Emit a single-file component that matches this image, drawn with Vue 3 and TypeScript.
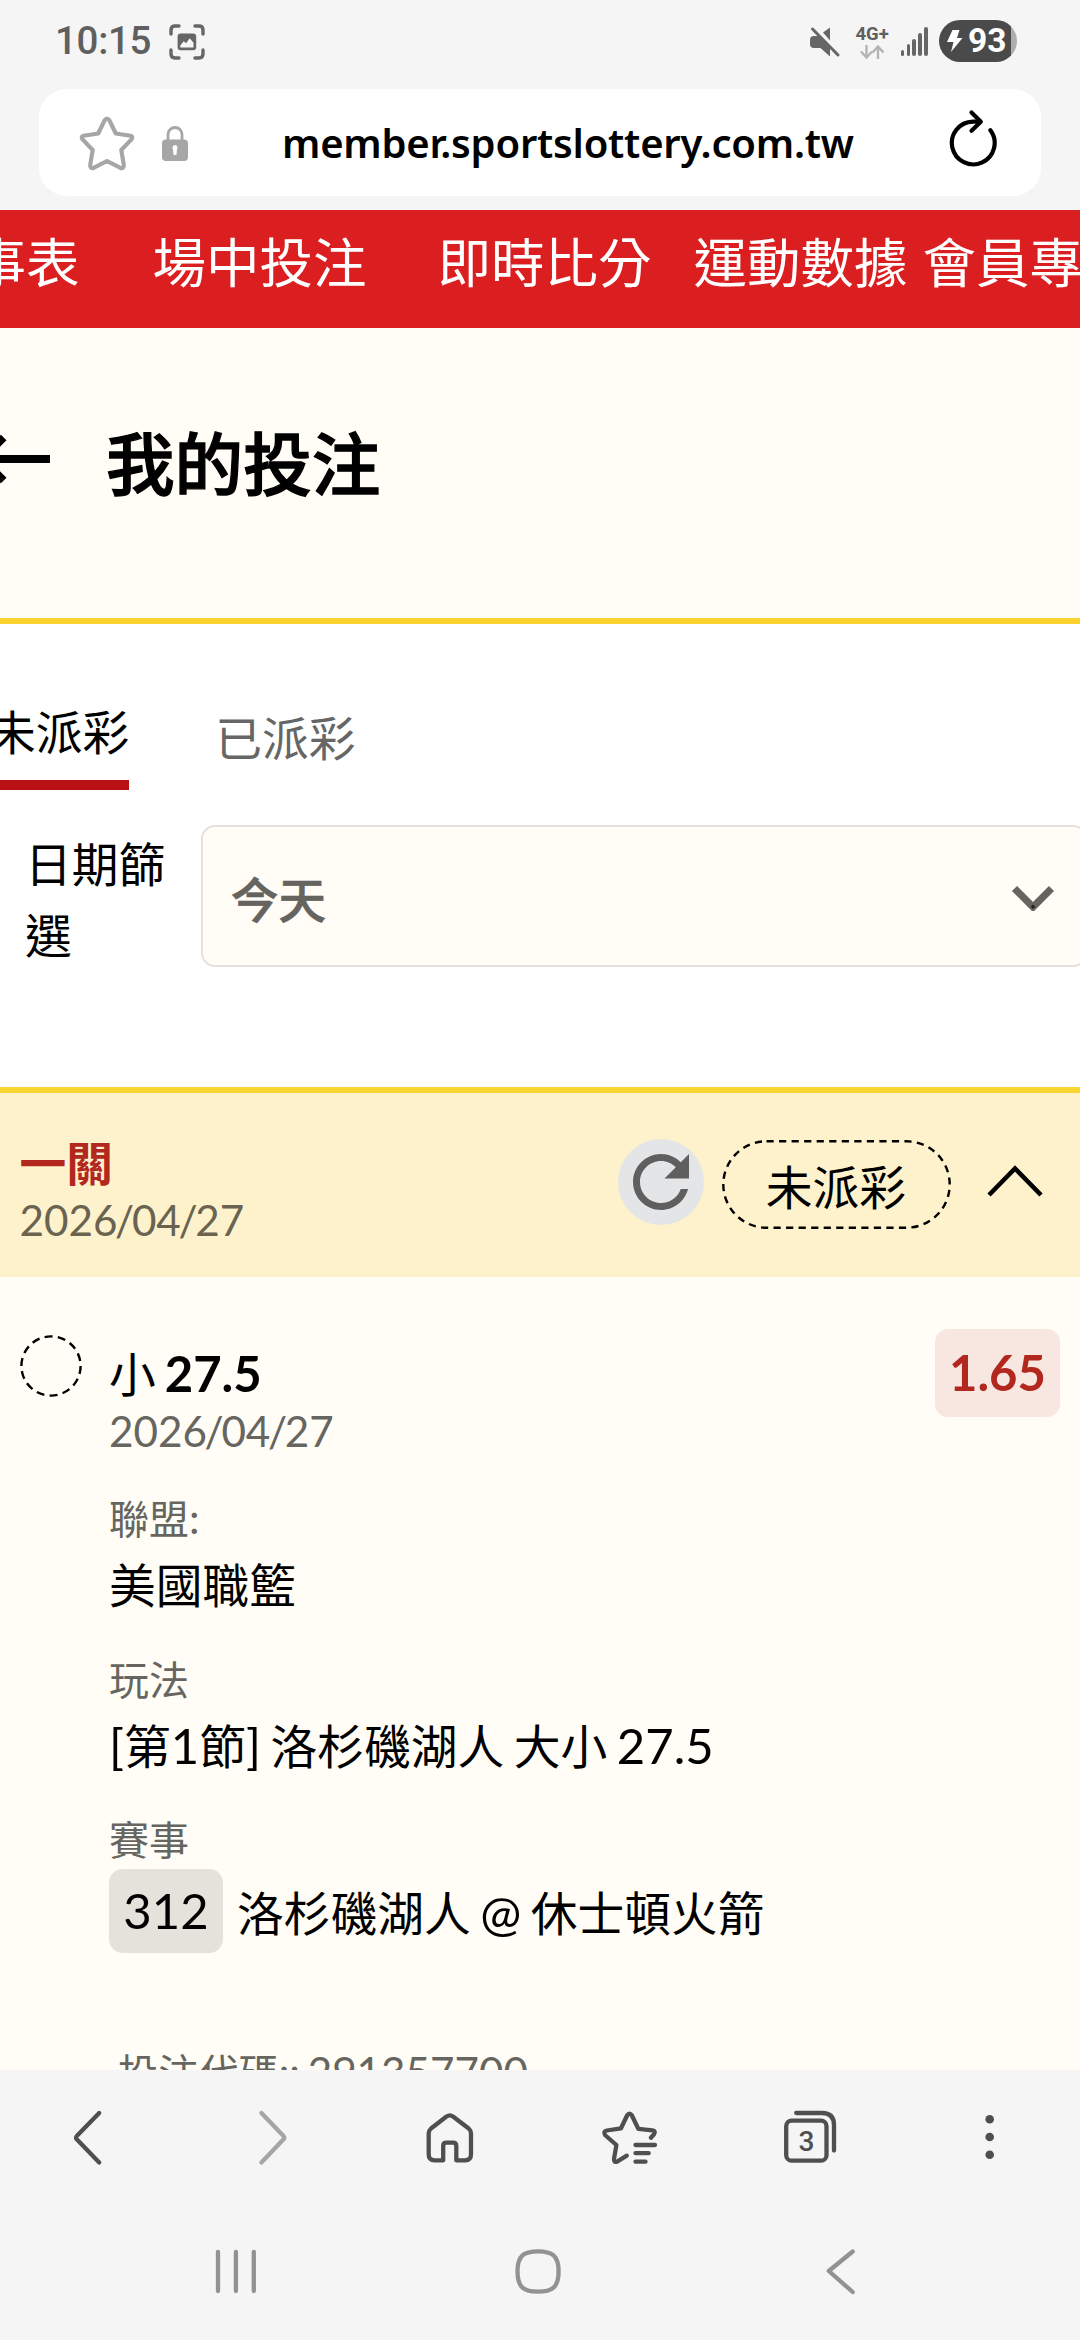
<script setup lang="ts">
interface NavItem {
  label: string
  gap: number
}

interface Tab {
  label: string
  active: boolean
}

const navItems: NavItem[] = [
  { label: '賽事表', gap: 73 },
  { label: '場中投注', gap: 71 },
  { label: '即時比分', gap: 42 },
  { label: '運動數據', gap: 15 },
  { label: '會員專區', gap: 0 },
]

const tabs: Tab[] = [
  { label: '未派彩', active: true },
  { label: '已派彩', active: false },
]

const signalBars: number[] = [6, 12, 17, 23, 29]

const bet = {
  kind: '一關',
  date: ['2026', '/', '04', '/', '27'],
  status: '未派彩',
  line: '27.5',
  odds: '1.65',
  league: '美國職籃',
  eventNo: '312',
  code: '291357700',
}
</script>

<template>
  <div class="screen" lang="zh-Hant">
    <header class="chrome">
      <div class="status">
        <span class="clock">10:15</span>
        <svg class="capture" width="36" height="36" viewBox="0 0 36 36" fill="none">
          <path d="M2 10V6Q2 2 6 2h4M26 2h4q4 0 4 4v4M34 26v4q0 4-4 4h-4M10 34H6q-4 0-4-4v-4" stroke="#666" stroke-width="3.4" stroke-linecap="round" />
          <rect x="8.6" y="9.6" width="18.6" height="16.6" rx="3" fill="#666" />
          <path d="M11.3 21.5l3.4-4.3 2.4 2 3.6-5 3.8 4.6v4.6H11.3z" fill="#f5f5f5" />
        </svg>
        <div class="status-right">
          <svg class="mute" width="32" height="32" viewBox="0 0 32 32">
            <path d="M1 14q0-4 4-4h4L21 21.500v9L11.500 22H5q-4 0-4-4z" fill="#666" />
            <path d="M14 6.500L21 1.500v13z" fill="#666" />
            <path d="M3.500 3L29 29" stroke="#666" stroke-width="3" stroke-linecap="round" />
          </svg>
          <div class="network">
            <span class="network-label">4G+</span>
            <svg width="24" height="14" viewBox="0 0 24 14" fill="none" stroke="#b4b4b4" stroke-width="2.400">
              <path d="M6.500 0v12M1 6.500l5.500 6 5.500-6M18 14V2M12.500 7.500l5.500-6 5.500 6" />
            </svg>
          </div>
          <div class="signal">
            <i v-for="h in signalBars" :key="h" :style="{ height: h + 'px' }" />
          </div>
          <div class="battery">
            <svg width="16" height="22" viewBox="0 0 16 22"><path d="M5.500 0h7L10 8h5.500L4 22l2.500-10H0z" fill="#fff" /></svg>
            <span>93</span>
          </div>
        </div>
      </div>
      <div class="urlbar">
        <svg class="fav" width="56" height="56" viewBox="0 0 56 56" fill="none" stroke="#a6a6a6" stroke-width="4.200" stroke-linejoin="round">
          <path d="M25.700 5.200Q28 1.800 30.300 5.200L36.800 18.500 51.500 20.800Q54.500 21.600 52.400 24.400L42.300 35 44.800 50Q44.800 54.200 41 52.700L28 46 15 52.700Q11.200 54.200 11.200 50L13.700 35 3.600 24.400Q1.500 21.600 4.500 20.800L19.200 18.500Z" />
        </svg>
        <svg class="lock" width="26" height="35" viewBox="0 0 26 35">
          <path d="M6 15V8.500a7 7 0 0 1 14 0V15" fill="none" stroke="#a6a6a6" stroke-width="2.800" />
          <rect y="13.500" width="26" height="21.500" rx="4" fill="#a6a6a6" />
          <path d="M13 19a2.600 2.600 0 0 1 2 4.200L14.500 29h-3L11 23.200A2.600 2.600 0 0 1 13 19z" fill="#fff" />
        </svg>
        <span class="url">member.sportslottery.com.tw</span>
        <svg class="reload" width="50" height="60" viewBox="0 0 50 60" fill="none" stroke="#000" stroke-width="4.200" stroke-linecap="round" stroke-linejoin="round">
          <path d="M42.400 22.200A21.400 21.400 0 1 1 24.900 13.600H32" />
          <path d="M23.500 4.500l9.300 9.200-9.300 9" />
        </svg>
      </div>
    </header>

    <nav class="sitenav">
      <a v-for="item in navItems" :key="item.label" :style="{ marginRight: item.gap + 'px' }">{{ item.label }}</a>
    </nav>

    <main class="content">
      <section class="heading">
        <svg class="back" width="50" height="60" viewBox="0 0 50 60" fill="none" stroke="#000" stroke-width="8">
          <path d="M-18 30H50M3.700 8.500L-17.800 30 3.700 51.500" />
        </svg>
        <h1>我的投注</h1>
      </section>

      <section class="filters">
        <div class="tabs">
          <div v-for="tab in tabs" :key="tab.label" role="tab" class="tab" :class="{ active: tab.active }">{{ tab.label }}</div>
        </div>
        <div class="filter-row">
          <label>日期篩選</label>
          <div class="select">
            <span>今天</span>
            <svg width="44" height="26" viewBox="0 0 44 26" stroke="#66645f" stroke-width="7.200">
              <path d="M3.500 3.500L24 24M40.500 3.500L20 24" />
              <path d="M22 19.500l2.200 2.200-2.200 2.200-2.200-2.200z" fill="#222" stroke="none" />
            </svg>
          </div>
        </div>
      </section>

      <section class="bet-head">
        <div class="bet-id">
          <strong>{{ bet.kind }}</strong>
          <span class="date"><i v-for="(part, n) in bet.date" :key="n">{{ part }}</i></span>
        </div>
        <div class="refresh">
          <svg width="84" height="84" viewBox="0 0 24 24"><path fill="#5f5f5f" d="M17.650 6.350C16.200 4.900 14.210 4 12 4c-4.420 0-7.990 3.580-7.990 8s3.570 8 7.990 8c3.730 0 6.840-2.550 7.730-6h-2.080c-.82 2.330-3.040 4-5.650 4-3.310 0-6-2.690-6-6s2.690-6 6-6c1.660 0 3.140.69 4.220 1.780L13 11h7V4l-2.350 2.350z" /></svg>
        </div>
        <div class="pill">
          <svg class="dash" width="229" height="89" viewBox="0 0 229 89" fill="none">
            <rect x="1.300" y="1.300" width="226.400" height="86.400" rx="43.200" stroke="#000" stroke-width="2.400" stroke-dasharray="7.200 5.340" />
          </svg>
          <span>{{ bet.status }}</span>
        </div>
        <svg class="collapse" width="56" height="32" viewBox="0 0 56 32" fill="none" stroke="#000" stroke-width="4.600"><path d="M2 30L28 3.500 54 30" /></svg>
      </section>

      <section class="bet-body">
        <svg class="pending" width="62" height="62" viewBox="0 0 62 62" fill="none">
          <circle cx="31" cy="31" r="29.600" stroke="#000" stroke-width="2.400" stroke-dasharray="8 5.280" />
        </svg>
        <div class="details">
          <div class="pick">小<b class="en gap">{{ bet.line }}</b></div>
          <div class="date"><i v-for="(part, n) in bet.date" :key="n">{{ part }}</i></div>
          <div class="label league">聯盟<i class="en-s">:</i></div>
          <div class="value">{{ bet.league }}</div>
          <div class="label play">玩法</div>
          <div class="value play-value"><i class="en">[</i>第<i class="en">1</i>節<i class="en">{{ '] ' }}</i>洛杉磯湖人<i class="en">{{ ' ' }}</i>大小<i class="en">{{ ' ' + bet.line }}</i></div>
          <div class="label event">賽事</div>
          <div class="match">
            <span class="event-no">{{ bet.eventNo }}</span>
            <span class="teams">洛杉磯湖人<i class="en">{{ ' @ ' }}</i>休士頓火箭</span>
          </div>
          <div class="code">投注代碼<i class="en-s">:: {{ bet.code }}</i></div>
        </div>
        <span class="odds">{{ bet.odds }}</span>
      </section>
    </main>

    <footer>
      <div class="toolbar">
        <svg viewBox="0 0 60 60"><path d="M39.200 5L17 27.800Q15 29.700 17 31.600L39.200 54.500" /></svg>
        <svg viewBox="0 0 60 60" class="dim"><path d="M21.400 5L43.300 27.800Q45.300 29.700 43.300 31.600L21.400 54.500" /></svg>
        <svg viewBox="0 0 60 60"><path d="M23.200 52.300H14.500Q8.700 52.300 8.700 46.300V25.500Q8.700 22.500 11 20.500L26.500 8.500Q29.800 6.300 33 8.500L48.700 20.500Q51 22.500 51 25.500V46.300Q51 52.300 45.200 52.300H36.300V38Q36.300 34.700 33 34.700H26.500Q23.200 34.700 23.200 38Z" /></svg>
        <svg viewBox="0 0 60 60">
          <path d="M50.900 29.700L54 26.200Q56 22.800 52.500 22.300L38.300 20.800 31.800 7.300Q29.500 3.900 27.200 7.300L21 20.300 6.800 22.500Q3 23.500 5 27L16.400 37 14 51Q14 55.300 17.500 53.300L26.800 47.700" />
          <path d="M35.500 37H55M35.500 45.200H48.700M35.500 53.700H45.500" />
        </svg>
        <svg viewBox="0 0 60 60">
          <rect x="6.200" y="12.700" width="40.300" height="40" rx="5.500" />
          <path d="M16.200 5H42Q54 5 54 17V42.500" />
          <text x="26.500" y="43" text-anchor="middle">3</text>
        </svg>
        <svg viewBox="0 0 60 60" class="dots"><circle cx="29.700" cy="11.300" r="4.300" /><circle cx="29.700" cy="29" r="4.300" /><circle cx="29.700" cy="46.700" r="4.300" /></svg>
      </div>
      <div class="sysnav">
        <svg viewBox="0 0 60 60"><path d="M12 10V49M29.900 10V49M47.800 10V49" /></svg>
        <svg viewBox="0 0 60 60"><path d="M30 9.300C44 9.300 50.600 13.500 50.600 29.500S44 49.700 30 49.700 9.500 45.500 9.500 29.500 16 9.300 30 9.300Z" /></svg>
        <svg viewBox="0 0 60 60"><path d="M42.700 9.500L18.800 29 42.700 50" /></svg>
      </div>
    </footer>
  </div>
</template>

<style>
body {
  background: #f5f5f5;
}
</style>

<style scoped>
* {
  box-sizing: border-box;
}
.screen {
  width: 1080px;
  height: 2340px;
  overflow: hidden;
  display: flex;
  flex-direction: column;
  background: #f5f5f5;
  color: #000;
  font-family: Lato, "Noto Sans CJK TC", sans-serif;
  font-size: 46.75px;
}
svg {
  display: block;
  flex: none;
}
i {
  font-style: normal;
}

/* browser chrome */
.chrome {
  height: 210px;
  flex: none;
}
.status {
  height: 89px;
  padding: 0 63px 0 55px;
  display: flex;
  align-items: flex-start;
}
.clock {
  width: 114px;
  margin-top: 18px;
  font: 500 38.5px/46px Roboto, sans-serif;
  letter-spacing: -0.3px;
  color: #5f5f5f;
}
.capture {
  margin-top: 24px;
}
.status-right {
  margin-left: auto;
  display: flex;
  align-items: flex-start;
}
.mute {
  margin: 26px 15px 0 0;
}
.network {
  width: 33px;
  margin: 26px 12px 0 0;
  display: flex;
  flex-direction: column;
  align-items: center;
  gap: 2px;
}
.network-label {
  font: 700 18.5px/17px Roboto, sans-serif;
  color: #5f5f5f;
}
.signal {
  height: 29px;
  margin: 27px 11px 0 0;
  display: flex;
  align-items: flex-end;
  gap: 2.1px;
}
.signal i {
  width: 3.8px;
  border-radius: 2px;
  background: #666;
}
.battery {
  width: 78px;
  height: 42px;
  margin-top: 20px;
  padding-left: 8px;
  border-radius: 21px;
  display: flex;
  align-items: center;
  gap: 5px;
  background: linear-gradient(90deg, #4a4a4a 72.500px, #aeaeae 72.500px);
}
.battery span {
  font: 700 33.5px/42px Roboto, sans-serif;
  color: #fff;
}
.urlbar {
  height: 107px;
  margin: 0 39px;
  padding: 0 43px 0 40px;
  border-radius: 28px;
  background: #fff;
  display: flex;
  align-items: center;
}
.lock {
  margin: 2px 0 0 27px;
}
.url {
  flex: 1;
  margin: 1px 0 0 94px;
  white-space: nowrap;
  font: 600 40px/60px "Noto Sans", sans-serif;
  letter-spacing: -0.22px;
}
.reload {
  margin-bottom: 10px;
}

/* site navigation */
.sitenav {
  height: 118px;
  flex: none;
  padding-top: 16px;
  display: flex;
  margin: 0;
  background: #db1e20;
  overflow: hidden;
}
.sitenav a {
  flex: none;
  color: #fff;
  font-size: 53.5px;
  line-height: 72px;
}
.sitenav a:first-child {
  margin-left: -81px;
}

.content {
  height: 1742px;
  flex: none;
  overflow: hidden;
}
.heading {
  height: 296px;
  padding-top: 89px;
  display: flex;
  background: #fffdf5;
  border-bottom: 6px solid #fcd22f;
}
.back {
  margin-top: 12px;
}
h1 {
  margin: 0 0 0 56px;
  font-size: 68.6px;
  line-height: 94px;
  font-weight: 500;
  -webkit-text-stroke: 1.3px currentColor;
}

.filters {
  height: 463px;
  padding-top: 72px;
  background: #fff;
}
.tabs {
  height: 94px;
  display: flex;
}
.tab {
  height: 94px;
  margin-left: 86px;
  padding-top: 7px;
  line-height: 70px;
  color: #666;
}
.tab.active {
  margin-left: -11px;
  padding-top: 1px;
  color: #000;
  border-bottom: 10px solid #b81014;
}
.filter-row {
  margin-top: 35px;
  padding-left: 25px;
  display: flex;
  align-items: flex-start;
}
.filter-row label {
  width: 145px;
  margin: 4px 31px 0 0;
  line-height: 70.5px;
  flex: none;
}
.select {
  flex: none;
  width: 886px;
  height: 142px;
  padding: 0 30px 0 28px;
  border: 2px solid #e6e1dc;
  border-radius: 14px;
  background: #fffdf5;
  display: flex;
  align-items: center;
  justify-content: space-between;
  color: #66645f;
  font-size: 47.500px;
  font-weight: 500;
  -webkit-text-stroke: 0.7px currentColor;
}
.select span {
  margin-top: 2px;
}
.select svg {
  margin-top: 3px;
}

/* bet slip */
.bet-head {
  height: 190px;
  border-top: 6px solid #fad633;
  background: #fef2cc;
  display: flex;
  align-items: flex-start;
  padding-left: 19.500px;
}
.bet-id {
  width: 598px;
  padding-top: 39px;
  display: flex;
  flex-direction: column;
  color: #69634f;
}
.bet-id strong {
  line-height: 62px;
  color: #b3281e;
}
.date {
  font-size: 42.2px;
  line-height: 42px;
}
.date i:nth-child(even) {
  margin: 0 -2.3px;
}
.bet-id .date {
  margin-top: 5px;
}
.refresh {
  width: 86px;
  height: 86px;
  margin-top: 46px;
  border-radius: 50%;
  background: #e4e5e7;
  display: flex;
  align-items: center;
  justify-content: center;
}
.pill {
  position: relative;
  width: 229px;
  height: 89px;
  margin: 47px 0 0 18px;
  text-align: center;
  line-height: 95px;
}
.pill .dash {
  position: absolute;
  inset: 0;
}
.collapse {
  margin: 72px 0 0 36px;
}
.bet-body {
  height: 793px;
  padding: 0 20px;
  display: flex;
  align-items: flex-start;
  background: #fffdf5;
}
.pending {
  margin-top: 58px;
}
.details {
  flex: 1;
  margin: 62px 0 0 27px;
  display: flex;
  flex-direction: column;
  white-space: pre;
}
.en {
  font-size: 49px;
  line-height: 1;
  word-spacing: -3px;
}
.en-s {
  font-size: 42.2px;
  line-height: 1;
  word-spacing: -3px;
}
.gap {
  margin-left: 9px;
}
.pick,
.value {
  height: 70px;
  line-height: 70px;
}
.details .date {
  margin-top: 1px;
  color: #66655f;
}
.label {
  font-size: 40px;
  height: 60px;
  line-height: 60px;
  color: #66655f;
}
.league {
  margin: 37px 0 1px;
}
.play {
  margin: 30px 0 1px;
}
.event {
  height: 55px;
  margin-top: 32px;
  line-height: 55px;
}
.match {
  display: flex;
}
.event-no {
  width: 114px;
  height: 84px;
  margin-top: 1px;
  border-radius: 14px;
  background: #e5e2dc;
  text-align: center;
  font-size: 49px;
  line-height: 83px;
}
.teams {
  margin-left: 14px;
  line-height: 90px;
}
.code {
  margin: 85px 0 0 9px;
  font-size: 40.2px;
  line-height: 60px;
  color: #66655f;
}
.odds {
  width: 125px;
  height: 88px;
  margin-top: 52px;
  border-radius: 13px;
  background: #f7e7e0;
  color: #b3281e;
  text-align: center;
  font-size: 49px;
  font-weight: 700;
  line-height: 87px;
}

/* bottom bars */
footer {
  margin-top: 3px;
}
.toolbar {
  height: 130px;
  display: flex;
  align-items: center;
  justify-content: space-around;
}
.toolbar svg,
.sysnav svg {
  width: 60px;
  height: 60px;
  fill: none;
  stroke: #4f4f50;
  stroke-width: 4.3;
  stroke-linecap: round;
  stroke-linejoin: round;
}
.toolbar .dim {
  stroke: #a5a5a5;
}
.toolbar .dots {
  fill: #4f4f50;
  stroke: none;
}
.toolbar text {
  font: 500 28px Roboto, sans-serif;
  fill: #4f4f50;
  stroke: none;
}
.sysnav {
  height: 137px;
  padding: 0 89px 0 85px;
  display: flex;
  align-items: center;
  justify-content: space-around;
}
.sysnav svg {
  stroke: #929292;
}
</style>
